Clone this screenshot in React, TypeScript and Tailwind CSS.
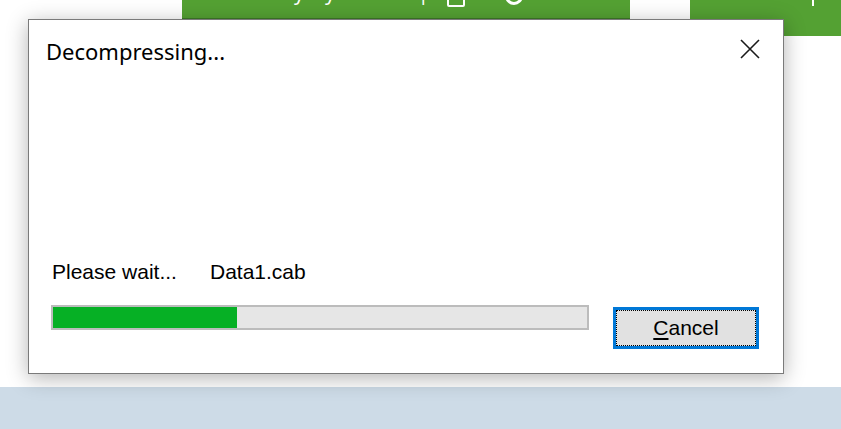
import React from "react";

export default function App() {
  return (
    <div className="relative w-[841px] h-[429px] overflow-hidden bg-white">
      {/* background page */}
      <div className="flex flex-col h-full">
        <div className="flex items-start h-[387px]">
          <div className="w-[182px]" />
          <div className="w-[448px] h-[19px] bg-[#54a133] border-b border-[#3e7b27] overflow-hidden flex gap-[18px] pl-[112px]">
            <span className="text-white text-[20px] leading-[20px] mt-[-17px] font-['Noto_Sans',sans-serif] whitespace-nowrap">
              y&nbsp;&nbsp;&nbsp;&nbsp;y&nbsp;&nbsp;&nbsp;&nbsp;/&nbsp;&nbsp;&nbsp;&nbsp;/&nbsp;&nbsp;&nbsp;&nbsp;&nbsp;|
            </span>
            <div className="w-[18px] h-[22px] mt-[-15px] border-2 border-white rounded-[2px]" />
            <div className="w-[18px] h-[18px] mt-[-13px] ml-[22px] rounded-full border-[3px] border-white" />
          </div>
          <div className="w-[60px]" />
          <div className="flex-1 h-[36px] bg-[#54a133] overflow-hidden pl-[122px]">
            <div className="w-[2px] h-[6px] bg-white" />
          </div>
        </div>
        <div className="flex-1 bg-[#cddbe7]" />
      </div>

      {/* dialog window */}
      <div className="absolute left-[28px] top-[19px] w-[756px] h-[355px] bg-white border border-[#7a7a7a] shadow-[0_4px_20px_rgba(0,0,0,0.3)] flex flex-col">
        <div className="flex items-start justify-between pt-[16px] pl-[17px] pr-[23px] h-[46px]">
          <span className="text-[22px] leading-[30px] text-[#000] font-['Noto_Sans',sans-serif]">
            Decompressing...
          </span>
          <svg width="20" height="20" viewBox="0 0 20 20" className="mt-[3px]">
            <path d="M1 1 L19 19 M19 1 L1 19" stroke="#1a1a1a" strokeWidth="1.6" fill="none" />
          </svg>
        </div>

        <div className="mt-[194px] flex pl-[23px] text-[21px] leading-[24px] text-black font-['Liberation_Sans',Arial,sans-serif]">
          <span className="w-[158px]">Please wait...</span>
          <span>Data1.cab</span>
        </div>

        <div className="mt-[21px] flex items-start pl-[22px] pr-[24px] justify-between">
          <div className="w-[538px] h-[25px] border-2 border-[#bcbcbc] bg-[#e6e6e6] flex">
            <div className="w-[184px] h-full bg-[#06b025]" />
          </div>
          <div className="mt-[2px] w-[146px] h-[42px] border-[3px] border-[#0078d7] bg-[#e1e1e1] flex">
            <div className="flex-1 border border-dotted border-black flex items-center justify-center">
              <span className="text-[21px] leading-[24px] text-black font-['Liberation_Sans',Arial,sans-serif]">
                <span className="underline underline-offset-[3px]">C</span>ancel
              </span>
            </div>
          </div>
        </div>
      </div>
    </div>
  );
}
